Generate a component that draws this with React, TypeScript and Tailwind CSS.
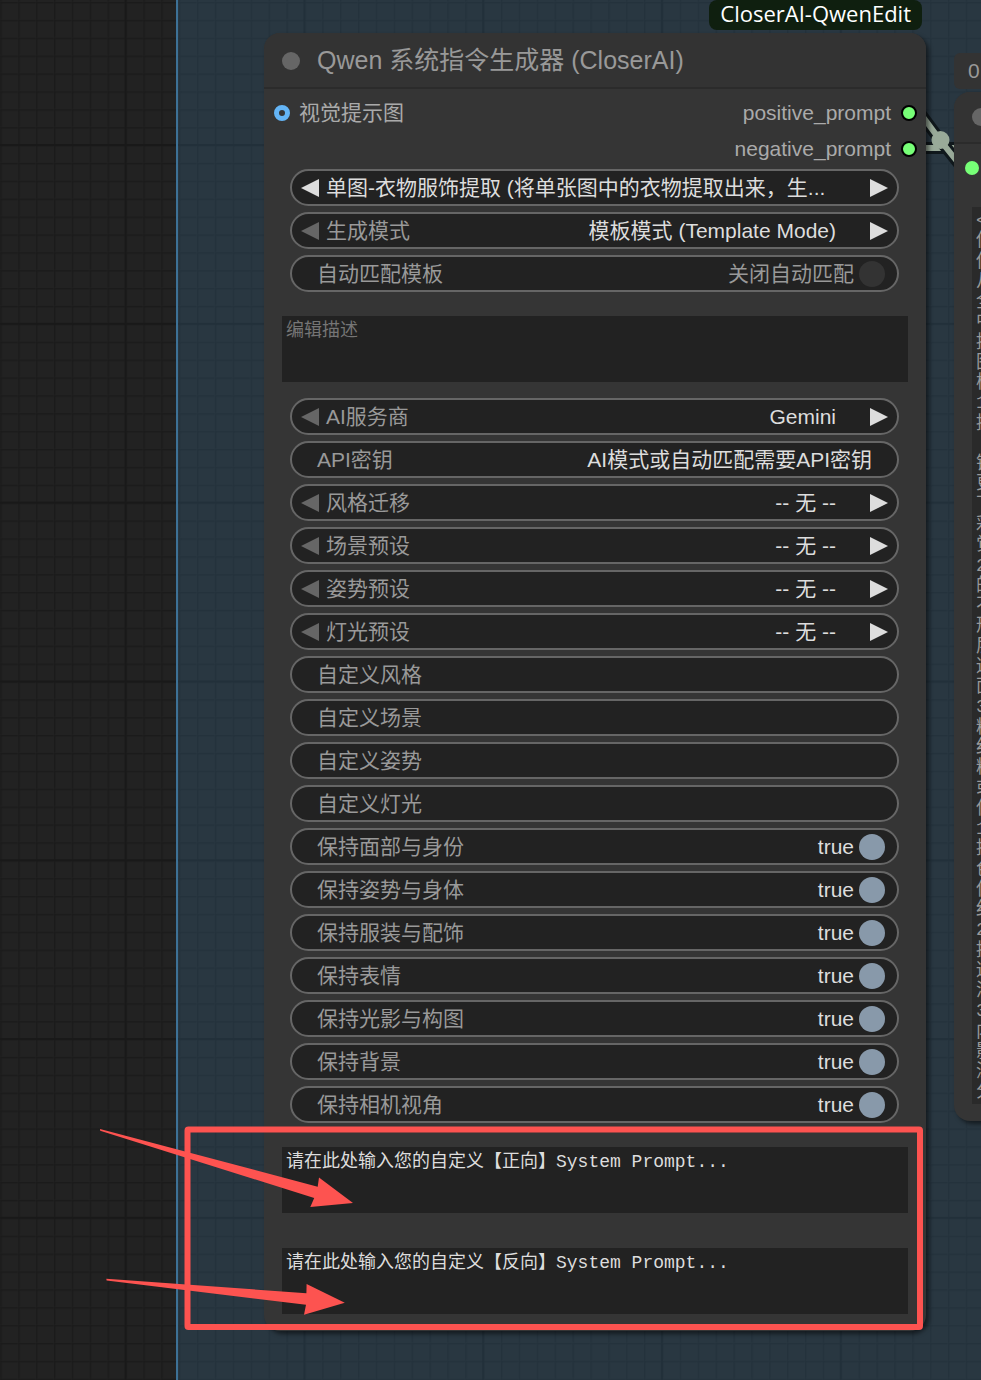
import { useId, useState } from 'react';

const NONE = '-- 无 --';

const TOGGLES = ['保持面部与身份', '保持姿势与身体', '保持服装与配饰', '保持表情', '保持光影与构图', '保持背景', '保持相机视角'];

const PRESETS = ['风格迁移', '场景预设', '姿势预设', '灯光预设'];

const CUSTOMS = ['自定义风格', '自定义场景', '自定义姿势', '自定义灯光'];

const PREVIEW_LINES = [
  '<', '你', '你', '从', '全', '中', '提', '图', '模', '1', '提', '', '镜', '更', '下', '彩', '觉', '2', '的', '不', '形', '层',
  '适', '面', '3', '精', '细', '精', '或', '保', '1', '提', '色', '保', '细', '2', '提', '适', '涉', '3', '内', '影', '深', '分',
];

const GRID = 178.8;

const pill = 'flex h-[37px] items-center rounded-full border-2 border-[#666] bg-[#222] text-[#999]';

// canvas grid: ten thin cells for each bold one
function CanvasGrid() {
  return (
    <svg className="absolute inset-0 size-full" aria-hidden="true">
      <defs>
        <pattern id="minor" width={GRID / 10} height={GRID / 10} x="125.5" y="145" patternUnits="userSpaceOnUse">
          <path d="M0.9 0V18M0 0.9H18" stroke="#1b1b1b" strokeWidth="1.8" transform="translate(-0.4 -0.4)" />
        </pattern>
        <pattern id="major" width={GRID} height={GRID} x="124.5" y="144" patternUnits="userSpaceOnUse">
          <path d="M1 0V179M0 1H179" stroke="#191919" strokeWidth="2" />
        </pattern>
      </defs>
      <rect width="100%" height="100%" fill="url(#minor)" />
      <rect width="100%" height="100%" fill="url(#major)" />
    </svg>
  );
}

function Arrow({ dir, color }: { dir: 'left' | 'right'; color: string }) {
  return (
    <svg width="18" height="18" viewBox="0 0 18 18" fill={color} aria-hidden="true">
      <path d={dir === 'left' ? 'M18 0V18L0 9Z' : 'M0 0V18L18 9Z'} />
    </svg>
  );
}

function Combo({ label, options, wide }: { label: string; options: string[]; wide?: boolean }) {
  const id = useId();
  const [index, setIndex] = useState(0);
  const step = (n: number) => setIndex(i => Math.min(options.length - 1, Math.max(0, i + n)));

  return (
    <div className={`${pill} px-[9px]`}>
      <button onClick={() => step(-1)} aria-label={`${label} -`} className="mr-[7px] shrink-0 cursor-pointer">
        <Arrow dir="left" color={wide ? '#ddd' : '#666'} />
      </button>
      {!wide && <label htmlFor={id} className="shrink-0">{label}</label>}
      <select
        id={id}
        aria-label={wide ? label : undefined}
        value={index}
        onChange={e => setIndex(Number(e.target.value))}
        className={wide
          ? 'min-w-0 flex-1 appearance-none bg-transparent text-[#ddd] outline-none'
          : 'min-w-0 flex-1 appearance-none bg-transparent text-[#ddd] outline-none [text-align-last:right]'}
      >
        {options.map((o, i) => <option key={o} value={i}>{o}</option>)}
      </select>
      <button onClick={() => step(1)} aria-label={`${label} +`} className="ml-[34px] shrink-0 cursor-pointer">
        <Arrow dir="right" color="#ddd" />
      </button>
    </div>
  );
}

function TextRow({ label, value = '' }: { label: string; value?: string }) {
  const id = useId();
  return (
    <div className={`${pill} px-[25px]`}>
      <label htmlFor={id} className="shrink-0">{label}</label>
      <input id={id} type="text" defaultValue={value} className="min-w-0 flex-1 bg-transparent text-right text-[#ddd] outline-none" />
    </div>
  );
}

function ToggleRow({ label, on = 'true', off = 'false', initial }: { label: string; on?: string; off?: string; initial: boolean }) {
  const id = useId();
  const [checked, setChecked] = useState(initial);
  return (
    <div className={`${pill} pl-[25px] pr-3`}>
      <label htmlFor={id} className="flex-1">{label}</label>
      <span className={checked ? 'text-[#ddd]' : 'text-[#999]'}>{checked ? on : off}</span>
      <input
        id={id}
        type="checkbox"
        checked={checked}
        onChange={e => setChecked(e.target.checked)}
        className="ml-[5px] size-[26px] appearance-none rounded-full bg-[#333] checked:bg-[#8899aa]"
      />
    </div>
  );
}

function Output({ name }: { name: string }) {
  return (
    <div className="flex h-9 items-center justify-end gap-[10px] pr-[9px]">
      <span>{name}</span>
      <span className="size-4 rounded-full border-2 border-black bg-[#77ff77]" />
    </div>
  );
}

function PromptBox({ label, value, placeholder }: { label: string; value?: string; placeholder?: string }) {
  return (
    <textarea
      aria-label={label}
      defaultValue={value}
      placeholder={placeholder}
      className="mx-[18px] block h-[66px] resize-none bg-[#222] px-[4px] py-[3px] font-['Liberation_Mono','Noto_Sans_CJK_SC',monospace] text-[18px] leading-6 text-[#ddd] outline-none placeholder:text-[#757575]"
    />
  );
}

function GeneratorNode() {
  return (
    <section className="relative flex w-[662px] shrink-0 flex-col rounded-[16px] bg-[#353535] pb-[17px] text-[21px] text-[#aaa] shadow-[3px_3px_4px_rgba(0,0,0,0.5)]">
      <span className="absolute right-[4px] bottom-full mb-[3px] rounded-[8px] bg-[#0f1f0f] px-[11px] pt-[1px] pb-[5px] font-['Open_Sans',sans-serif] text-[22px] leading-6 font-medium text-white">
        CloserAI-QwenEdit
      </span>
      <header className="flex h-14 items-center gap-[17px] rounded-t-[16px] border-b-2 border-[#2b2b2b] bg-[#333] pt-[2px] pl-[18px]">
        <span className="size-[18px] rounded-full bg-[#666]" />
        <h1 className="text-[25px] text-[#999]">Qwen 系统指令生成器 (CloserAI)</h1>
      </header>

      <div className="flex justify-between pt-[6px]">
        <div className="flex h-9 items-center gap-[9px] pl-[10px]">
          <span className="size-4 rounded-full border-[5px] border-[#64b5f6]" />
          <span>视觉提示图</span>
        </div>
        <div>
          <Output name="positive_prompt" />
          <Output name="negative_prompt" />
        </div>
      </div>

      <div className="mt-[2px] mb-6 flex flex-col gap-[6px] pr-[27px] pl-[26px]">
        <Combo wide label="模板" options={['单图-衣物服饰提取 (将单张图中的衣物提取出来，生...']} />
        <Combo label="生成模式" options={['模板模式 (Template Mode)']} />
        <ToggleRow label="自动匹配模板" on="开启自动匹配" off="关闭自动匹配" initial={false} />
      </div>

      <PromptBox label="编辑描述" placeholder="编辑描述" />

      <div className="mt-4 mb-6 flex flex-col gap-[6px] pr-[27px] pl-[26px]">
        <Combo label="AI服务商" options={['Gemini']} />
        <TextRow label="API密钥" value="AI模式或自动匹配需要API密钥" />
        {PRESETS.map(p => <Combo key={p} label={p} options={[NONE]} />)}
        {CUSTOMS.map(c => <TextRow key={c} label={c} />)}
        {TOGGLES.map(t => <ToggleRow key={t} label={t} initial />)}
      </div>

      <div className="flex flex-col gap-[35px]">
        <PromptBox label="正向" value="请在此处输入您的自定义【正向】System Prompt..." />
        <PromptBox label="反向" value="请在此处输入您的自定义【反向】System Prompt..." />
      </div>
    </section>
  );
}

function PreviewNode() {
  return (
    <div className="mt-5 w-[420px] shrink-0 text-[21px] text-[#999]">
      <span className="inline-flex h-9 items-center rounded-[6px] bg-[#333] px-[14px]">0</span>
      <section className="mt-[3px] rounded-[16px] bg-[#353535] pb-[17px] shadow-[3px_3px_4px_rgba(0,0,0,0.5)]">
        <header className="flex h-[52px] items-center rounded-t-[16px] border-b-2 border-[#2b2b2b] bg-[#333] pl-[18px]">
          <span className="size-[18px] rounded-full bg-[#666]" />
        </header>
        <div className="flex h-[63px] items-start pt-[17px] pl-[11px]">
          <span className="size-[14px] rounded-full bg-[#77ff77]" />
        </div>
        <div className="mx-[18px] flex h-[897px] flex-col justify-between bg-[#2a2a2a] px-[4px] pt-[4px] pb-[1px] font-['Liberation_Mono','Noto_Sans_CJK_SC',monospace] text-[18px] leading-5">
          {PREVIEW_LINES.map((line, i) => <p key={i} className="h-5">{line}</p>)}
        </div>
      </section>
    </div>
  );
}

function Links() {
  return (
    <svg className="absolute inset-0 size-full" fill="none" aria-hidden="true">
      <path d="M909 148H972" stroke="#10181c" strokeWidth="12" />
      <path d="M909 148H972" stroke="#99aa99" strokeWidth="6" />
      <path d="M909 98L940 140L972 180" stroke="#10181c" strokeWidth="12" />
      <path d="M909 98L940 140L972 180" stroke="#99aa99" strokeWidth="6" />
      <circle cx="940.5" cy="140" r="9" fill="#99aa99" />
    </svg>
  );
}

function Annotations() {
  return (
    <svg className="pointer-events-none absolute inset-0 size-full" aria-hidden="true">
      <rect x="187.5" y="1129.5" width="732.5" height="197.5" rx="1" fill="none" stroke="#fd5350" strokeWidth="6" strokeLinejoin="round" />
      <path d="M100 1129L317.7 1186.7L319 1177.5L353 1203L310.3 1207L314.2 1198L100.2 1130.7Z" fill="#fd5350" />
      <path d="M106.3 1278.7L306.4 1293.3L306.6 1284L344.8 1302.7L304 1314.7L306 1304.7L106.6 1280.5Z" fill="#fd5350" />
    </svg>
  );
}

export default function App() {
  return (
    <main className="relative min-h-screen overflow-hidden bg-[#222] font-['Liberation_Sans','Noto_Sans_CJK_SC',sans-serif]">
      <CanvasGrid />
      <div className="absolute inset-y-0 right-0 left-[176px] border-l-2 border-[#3d7196] bg-[#3f789e]/25" />
      <Links />
      <div className="relative flex items-start gap-7 pt-[33px] pl-[264px]">
        <GeneratorNode />
        <PreviewNode />
      </div>
      <Annotations />
    </main>
  );
}
